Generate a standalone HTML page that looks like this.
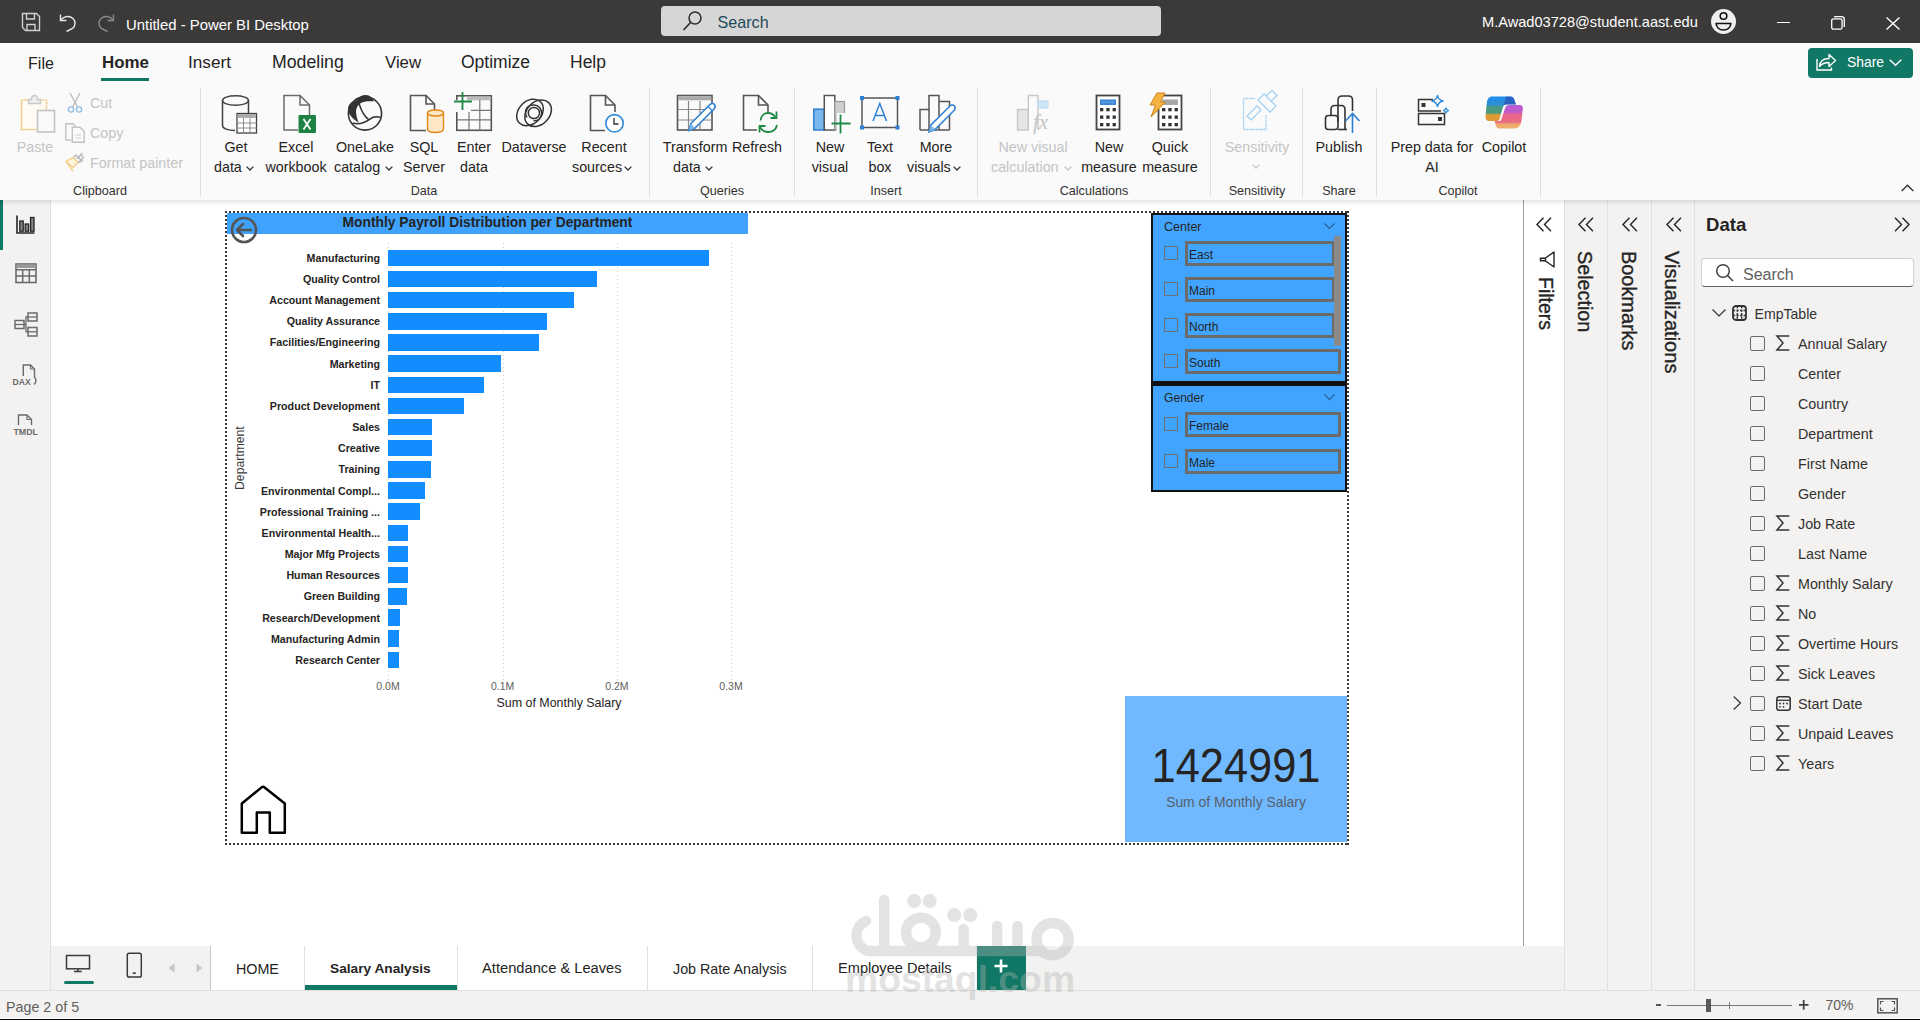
<!DOCTYPE html>
<html><head><meta charset="utf-8"><title>Power BI Desktop</title><style>
*{margin:0;padding:0;box-sizing:border-box}
html,body{width:1920px;height:1020px;overflow:hidden}
body{position:relative;font-family:"Liberation Sans",sans-serif;background:#fff}
.a{position:absolute}
.t{position:absolute;white-space:nowrap;line-height:1}
svg{overflow:visible}
</style></head><body>

<div class="a" style="left:0px;top:0px;width:1920px;height:43px;background:#3b3a39"></div>
<div class="t" style="left:126.0px;top:17.7px;font-size:14.9px;color:#ffffff;font-weight:400;">Untitled - Power BI Desktop</div>
<div class="a" style="left:661px;top:6px;width:500px;height:30px;background:#d6d6d6;border-radius:4px"></div>
<div class="t" style="left:717.6px;top:14.3px;font-size:16.1px;color:#1e4a5a;font-weight:400;">Search</div>
<svg class="a" style="left:21px;top:12px" width="20" height="20" viewBox="0 0 20 20"><path d="M1.5 1.5H15.5L18.5 4.5V18.5H4.5L1.5 15.5Z" fill="none" stroke="#d0d0d0" stroke-width="1.4"/><path d="M5.5 1.5V7H13.5V1.5M6 18.5V12.5H14V18.5" fill="none" stroke="#d0d0d0" stroke-width="1.4"/></svg>
<svg class="a" style="left:59px;top:13px" width="18" height="19" viewBox="0 0 18 19"><path d="M1.5 1.5V7.5H7.5" fill="none" stroke="#e8e8e8" stroke-width="1.4"/><path d="M1.8 7.2C5 3 10.5 2.2 14 5.5C17 8.5 16.5 13 13.5 15.5L7.5 18.5" fill="none" stroke="#e8e8e8" stroke-width="1.4"/></svg>
<svg class="a" style="left:97px;top:13px" width="18" height="19" viewBox="0 0 18 19"><path d="M16.5 1.5V7.5H10.5" fill="none" stroke="#8a8a8a" stroke-width="1.4"/><path d="M16.2 7.2C13 3 7.5 2.2 4 5.5C1 8.5 1.5 13 4.5 15.5L10.5 18.5" fill="none" stroke="#8a8a8a" stroke-width="1.4"/></svg>
<svg class="a" style="left:682px;top:11px" width="22" height="21" viewBox="0 0 22 21"><circle cx="13" cy="7" r="6" fill="none" stroke="#2b2b2b" stroke-width="1.5"/><path d="M8.8 11.2L1.5 19" stroke="#2b2b2b" stroke-width="1.6"/></svg>
<svg class="a" style="left:1711px;top:9px" width="25" height="25" viewBox="0 0 25 25"><circle cx="12.5" cy="12.5" r="12.5" fill="#f0efee"/><circle cx="12.5" cy="7" r="3.3" fill="none" stroke="#111" stroke-width="1.6"/><path d="M5.2 14.5H19.8C19.8 18.5 16.5 21 12.5 21C8.5 21 5.2 18.5 5.2 14.5Z" fill="none" stroke="#111" stroke-width="1.6"/></svg>
<div class="a" style="left:1777px;top:21.5px;width:12.5px;height:1.3px;background:#fff"></div>
<svg class="a" style="left:1831px;top:16px" width="14" height="14" viewBox="0 0 14 14"><rect x="0.7" y="2.8" width="10.4" height="10.4" rx="1.8" fill="none" stroke="#fff" stroke-width="1.3"/><path d="M3 0.7H10.5C12 0.7 13.3 2 13.3 3.5V11" fill="none" stroke="#fff" stroke-width="1.3"/></svg>
<svg class="a" style="left:1886px;top:17px" width="14" height="13" viewBox="0 0 14 13"><path d="M0.5 0.5L13.5 12.5M13.5 0.5L0.5 12.5" stroke="#fff" stroke-width="1.4"/></svg>
<div class="t" style="left:1482.0px;top:14.7px;font-size:14.6px;color:#ffffff;font-weight:400;">M.Awad03728@student.aast.edu</div>
<div class="a" style="left:0px;top:43px;width:1920px;height:157px;background:#fafafa"></div>
<div class="t" style="left:28.0px;top:55.4px;font-size:16.1px;color:#252423;font-weight:400;">File</div>
<div class="t" style="left:188.0px;top:54.4px;font-size:17.2px;color:#252423;font-weight:400;">Insert</div>
<div class="t" style="left:272.0px;top:54.0px;font-size:17.7px;color:#252423;font-weight:400;">Modeling</div>
<div class="t" style="left:385.0px;top:54.8px;font-size:16.8px;color:#252423;font-weight:400;">View</div>
<div class="t" style="left:461.0px;top:54.2px;font-size:17.5px;color:#252423;font-weight:400;">Optimize</div>
<div class="t" style="left:570.0px;top:54.2px;font-size:17.5px;color:#252423;font-weight:400;">Help</div>
<div class="t" style="left:102.0px;top:54.7px;font-size:16.9px;color:#252423;font-weight:700;">Home</div>
<div class="a" style="left:101px;top:78px;width:48px;height:3px;background:#117865"></div>
<div class="a" style="left:1808px;top:48px;width:105px;height:30px;background:#117865;border-radius:4px"></div>
<div class="t" style="left:1847.0px;top:56.2px;font-size:13.9px;color:#ffffff;font-weight:400;">Share</div>
<svg class="a" style="left:1816px;top:52px" width="21" height="19" viewBox="0 0 21 19"><path d="M1 7V18H15.5V15.5" fill="none" stroke="#fff" stroke-width="1.4"/><path d="M3.5 14.5C4 9 8 6.5 13 6.5V2.5L19.5 8.5L13 14.5V10.5C9 10.5 6 11.5 3.5 14.5Z" fill="none" stroke="#fff" stroke-width="1.4" stroke-linejoin="round"/></svg>
<svg class="a" style="left:1889px;top:59px" width="13" height="7" viewBox="0 0 13 7"><path d="M0.7 0.7L6.5 6.3L12.3 0.7" fill="none" stroke="#fff" stroke-width="1.4"/></svg>
<div class="a" style="left:200px;top:88px;width:1px;height:109px;background:#e1dfdd"></div>
<div class="a" style="left:649px;top:88px;width:1px;height:109px;background:#e1dfdd"></div>
<div class="a" style="left:794px;top:88px;width:1px;height:109px;background:#e1dfdd"></div>
<div class="a" style="left:977px;top:88px;width:1px;height:109px;background:#e1dfdd"></div>
<div class="a" style="left:1210px;top:88px;width:1px;height:109px;background:#e1dfdd"></div>
<div class="a" style="left:1302px;top:88px;width:1px;height:109px;background:#e1dfdd"></div>
<div class="a" style="left:1376px;top:88px;width:1px;height:109px;background:#e1dfdd"></div>
<div class="a" style="left:1540px;top:88px;width:1px;height:109px;background:#e1dfdd"></div>
<div class="t" style="left:-200.0px;width:600px;text-align:center;top:185.3px;font-size:12.6px;color:#323130;font-weight:400;">Clipboard</div>
<div class="t" style="left:124.0px;width:600px;text-align:center;top:185.3px;font-size:12.6px;color:#323130;font-weight:400;">Data</div>
<div class="t" style="left:422.0px;width:600px;text-align:center;top:185.3px;font-size:12.6px;color:#323130;font-weight:400;">Queries</div>
<div class="t" style="left:586.0px;width:600px;text-align:center;top:185.3px;font-size:12.6px;color:#323130;font-weight:400;">Insert</div>
<div class="t" style="left:794.0px;width:600px;text-align:center;top:185.3px;font-size:12.6px;color:#323130;font-weight:400;">Calculations</div>
<div class="t" style="left:957.0px;width:600px;text-align:center;top:185.3px;font-size:12.6px;color:#323130;font-weight:400;">Sensitivity</div>
<div class="t" style="left:1039.0px;width:600px;text-align:center;top:185.3px;font-size:12.6px;color:#323130;font-weight:400;">Share</div>
<div class="t" style="left:1158.0px;width:600px;text-align:center;top:185.3px;font-size:12.6px;color:#323130;font-weight:400;">Copilot</div>
<div class="t" style="left:-265.0px;width:600px;text-align:center;top:139.9px;font-size:14.3px;color:#c4c4c4;font-weight:400;">Paste</div>
<div class="t" style="left:90.0px;top:95.9px;font-size:14.3px;color:#c4c4c4;font-weight:400;">Cut</div>
<div class="t" style="left:90.0px;top:125.9px;font-size:14.3px;color:#c4c4c4;font-weight:400;">Copy</div>
<div class="t" style="left:90.0px;top:155.9px;font-size:14.3px;color:#c4c4c4;font-weight:400;">Format painter</div>
<div class="t" style="left:-64.0px;width:600px;text-align:center;top:139.9px;font-size:14.3px;color:#252423;font-weight:400;">Get</div>
<div class="t" style="left:214.0px;top:159.9px;font-size:14.3px;color:#252423;font-weight:400;">data</div>
<div class="t" style="left:-4.0px;width:600px;text-align:center;top:139.9px;font-size:14.3px;color:#252423;font-weight:400;">Excel</div>
<div class="t" style="left:-4.0px;width:600px;text-align:center;top:159.9px;font-size:14.3px;color:#252423;font-weight:400;">workbook</div>
<div class="t" style="left:65.0px;width:600px;text-align:center;top:139.9px;font-size:14.3px;color:#252423;font-weight:400;">OneLake</div>
<div class="t" style="left:334.0px;top:159.9px;font-size:14.3px;color:#252423;font-weight:400;">catalog</div>
<div class="t" style="left:124.0px;width:600px;text-align:center;top:139.9px;font-size:14.3px;color:#252423;font-weight:400;">SQL</div>
<div class="t" style="left:124.0px;width:600px;text-align:center;top:159.9px;font-size:14.3px;color:#252423;font-weight:400;">Server</div>
<div class="t" style="left:174.0px;width:600px;text-align:center;top:139.9px;font-size:14.3px;color:#252423;font-weight:400;">Enter</div>
<div class="t" style="left:174.0px;width:600px;text-align:center;top:159.9px;font-size:14.3px;color:#252423;font-weight:400;">data</div>
<div class="t" style="left:234.0px;width:600px;text-align:center;top:139.9px;font-size:14.3px;color:#252423;font-weight:400;">Dataverse</div>
<div class="t" style="left:304.0px;width:600px;text-align:center;top:139.9px;font-size:14.3px;color:#252423;font-weight:400;">Recent</div>
<div class="t" style="left:572.0px;top:159.9px;font-size:14.3px;color:#252423;font-weight:400;">sources</div>
<div class="t" style="left:395.0px;width:600px;text-align:center;top:139.9px;font-size:14.3px;color:#252423;font-weight:400;">Transform</div>
<div class="t" style="left:673.0px;top:159.9px;font-size:14.3px;color:#252423;font-weight:400;">data</div>
<div class="t" style="left:457.0px;width:600px;text-align:center;top:139.9px;font-size:14.3px;color:#252423;font-weight:400;">Refresh</div>
<div class="t" style="left:530.0px;width:600px;text-align:center;top:139.9px;font-size:14.3px;color:#252423;font-weight:400;">New</div>
<div class="t" style="left:530.0px;width:600px;text-align:center;top:159.9px;font-size:14.3px;color:#252423;font-weight:400;">visual</div>
<div class="t" style="left:580.0px;width:600px;text-align:center;top:139.9px;font-size:14.3px;color:#252423;font-weight:400;">Text</div>
<div class="t" style="left:580.0px;width:600px;text-align:center;top:159.9px;font-size:14.3px;color:#252423;font-weight:400;">box</div>
<div class="t" style="left:636.0px;width:600px;text-align:center;top:139.9px;font-size:14.3px;color:#252423;font-weight:400;">More</div>
<div class="t" style="left:907.0px;top:159.9px;font-size:14.3px;color:#252423;font-weight:400;">visuals</div>
<div class="t" style="left:733.0px;width:600px;text-align:center;top:139.9px;font-size:14.3px;color:#c4c4c4;font-weight:400;">New visual</div>
<div class="t" style="left:991.0px;top:159.9px;font-size:14.3px;color:#c4c4c4;font-weight:400;">calculation</div>
<div class="t" style="left:809.0px;width:600px;text-align:center;top:139.9px;font-size:14.3px;color:#252423;font-weight:400;">New</div>
<div class="t" style="left:809.0px;width:600px;text-align:center;top:159.9px;font-size:14.3px;color:#252423;font-weight:400;">measure</div>
<div class="t" style="left:870.0px;width:600px;text-align:center;top:139.9px;font-size:14.3px;color:#252423;font-weight:400;">Quick</div>
<div class="t" style="left:870.0px;width:600px;text-align:center;top:159.9px;font-size:14.3px;color:#252423;font-weight:400;">measure</div>
<div class="t" style="left:957.0px;width:600px;text-align:center;top:139.9px;font-size:14.3px;color:#c4c4c4;font-weight:400;">Sensitivity</div>
<div class="t" style="left:1039.0px;width:600px;text-align:center;top:139.9px;font-size:14.3px;color:#252423;font-weight:400;">Publish</div>
<div class="t" style="left:1132.0px;width:600px;text-align:center;top:139.9px;font-size:14.3px;color:#252423;font-weight:400;">Prep data for</div>
<div class="t" style="left:1132.0px;width:600px;text-align:center;top:159.9px;font-size:14.3px;color:#252423;font-weight:400;">AI</div>
<div class="t" style="left:1204.0px;width:600px;text-align:center;top:139.9px;font-size:14.3px;color:#252423;font-weight:400;">Copilot</div>
<svg class="a" style="left:20px;top:94px" width="36" height="40" viewBox="0 0 36 40"><path d="M1.5 6H9M18 6H26.5V16" fill="none" stroke="#f3cf8f" stroke-width="1.6" stroke-dasharray="2 0.6"/><path d="M1.5 6V35.5H16.5" fill="none" stroke="#f3cf8f" stroke-width="1.6"/><rect x="3" y="7.5" width="22" height="27" fill="#fffbf2"/><path d="M8.5 9.5V5.5H11.5C11.5 3 12.5 1.5 14.5 1.5C16.5 1.5 17.5 3 17.5 5.5H20.5V9.5Z" fill="#eee" stroke="#c8c8c8" stroke-width="1.4"/><rect x="17.5" y="16.5" width="17" height="21.5" fill="#fafafa" stroke="#c2c2c2" stroke-width="1.6"/></svg>
<svg class="a" style="left:67px;top:92px" width="16" height="22" viewBox="0 0 16 22"><path d="M3 1L10.5 15M13 1L5.5 15" stroke="#b5b5b5" stroke-width="1.2"/><circle cx="4" cy="17.5" r="2.6" fill="none" stroke="#8fbfe6" stroke-width="1.4"/><circle cx="12" cy="17.5" r="2.6" fill="none" stroke="#8fbfe6" stroke-width="1.4"/></svg>
<svg class="a" style="left:65px;top:123px" width="21" height="20" viewBox="0 0 21 20"><path d="M0.8 17.2V0.8H8L10.5 3.3" fill="none" stroke="#c2c2c2" stroke-width="1.4"/><path d="M0.8 17.2H6.5" stroke="#c2c2c2" stroke-width="1.4"/><path d="M7.3 19.2V4.3H15L19.2 8.5V19.2Z" fill="#fafafa" stroke="#c2c2c2" stroke-width="1.4"/><path d="M10.5 12H16M10.5 15H16" stroke="#d0d0d0" stroke-width="1"/></svg>
<svg class="a" style="left:65px;top:152px" width="20" height="20" viewBox="0 0 20 20"><path d="M1 9.5L8 15.5L13 10.5L8.5 5.5Z" fill="#fff6dd" stroke="#f3cf8f" stroke-width="1.4"/><path d="M1 9.5L8 19" stroke="#f3cf8f" stroke-width="1.4"/><path d="M8.5 5.5L11 3L17 9L13 10.5M12 6.5L17.5 1M16 3L18.5 5.5L14 10" fill="none" stroke="#b9b9b9" stroke-width="1.4"/></svg>
<svg class="a" style="left:221px;top:94px" width="37" height="40" viewBox="0 0 37 40"><path d="M1.5 6.5V31.5C1.5 34.5 7 36.5 14 36.5" fill="none" stroke="#424242" stroke-width="1.5"/><ellipse cx="14.5" cy="6.5" rx="13" ry="4.8" fill="none" stroke="#424242" stroke-width="1.5"/><path d="M27.5 6.5V19" fill="none" stroke="#424242" stroke-width="1.5"/><rect x="16" y="19.5" width="19.5" height="19.5" fill="#fff" stroke="#424242" stroke-width="1.3"/><rect x="16.6" y="20.1" width="18.3" height="3.8" fill="#aaa"/><path d="M22.5 24V39M29 24V39M16 29H35.5M16 34H35.5" stroke="#8a8a8a" stroke-width="1"/></svg>
<svg class="a" style="left:283px;top:94px" width="34" height="40" viewBox="0 0 34 40"><path d="M15 36H1V1.5H17L26.5 11V21" fill="none" stroke="#6b6b6b" stroke-width="1.5"/><path d="M17 1.5V11H26.5" fill="none" stroke="#6b6b6b" stroke-width="1.5"/><rect x="15.5" y="21" width="17.5" height="18" rx="1" fill="#1d8244"/><path d="M20.5 25L27.5 35.5M27.5 25L20.5 35.5" stroke="#fff" stroke-width="1.8"/></svg>
<svg class="a" style="left:340px;top:88px" width="50" height="50" viewBox="340 88 50 50"><circle cx="365" cy="113.5" r="16.6" fill="none" stroke="#333" stroke-width="1.6"/><path d="M359 122.8C352 119 347.5 113 348.1 108C348.6 104 352 101 356.2 100.5C358.5 97 362 95 366 95.1C370 95.2 372.8 98 373.8 101.5C370 101 364 101 360.6 103.2C357 105.5 355.5 110 356.2 113.5C356.5 117 357.5 120.5 359 122.8Z" fill="#333"/><path d="M359.1 103.7C361 110 364 116 368.9 119.9M352.7 123C358 124.5 364 123 368.9 119.9C372 117 375 115.5 380.7 117.4" fill="none" stroke="#333" stroke-width="1.5"/></svg>
<svg class="a" style="left:409px;top:94px" width="36" height="40" viewBox="0 0 36 40"><path d="M17 36.5H1.5V1.5H17L25.5 10V16" fill="none" stroke="#555" stroke-width="1.6"/><path d="M17 1.5V10H25.5" fill="none" stroke="#555" stroke-width="1.6"/><path d="M18.5 19V34.5C18.5 37 21.5 38.5 26.5 38.5C31.5 38.5 34.5 37 34.5 34.5V19Z" fill="#fde7c4" stroke="#e08a1e" stroke-width="1.4"/><ellipse cx="26.5" cy="19" rx="8" ry="3" fill="#fde7c4" stroke="#e08a1e" stroke-width="1.4"/></svg>
<svg class="a" style="left:453px;top:92px" width="40" height="40" viewBox="0 0 40 40"><rect x="3.8" y="3.8" width="34.5" height="34.5" fill="none" stroke="#555" stroke-width="1.6"/><rect x="14" y="4.5" width="23.5" height="3.8" fill="#bbb"/><path d="M16 18.5V38M26.8 18.5V38M4 18.3H38M4 27.8H38M26.8 8V18.5" stroke="#777" stroke-width="1.2"/><rect x="0" y="8" width="18" height="12" fill="#fafafa"/><path d="M9.5 0V18M1 9.5H19" stroke="#1e8a45" stroke-width="1.8"/></svg>
<svg class="a" style="left:510px;top:92px" width="50" height="40" viewBox="510 92 50 40"><g fill="none" stroke="#333" stroke-width="1.5"><ellipse cx="530" cy="112.45" rx="15" ry="11.3" transform="rotate(-45 530 112.45)"/><ellipse cx="538.1" cy="113.25" rx="15" ry="11.3" transform="rotate(-45 538.1 113.25)"/><path d="M527 117.5C523 110 528 104.5 534 105C540 105.5 543 111 541 116.5C539.5 120 536 121 533.5 120.5" fill="none"/><circle cx="533.9" cy="113" r="5.6"/></g></svg>
<svg class="a" style="left:589px;top:94px" width="36" height="40" viewBox="0 0 36 40"><path d="M16 36.5H1.5V1.5H16.5L26 11V18" fill="none" stroke="#555" stroke-width="1.6"/><path d="M16.5 1.5V11H26" fill="none" stroke="#555" stroke-width="1.6"/><circle cx="25.5" cy="29.3" r="8.7" fill="#fff" stroke="#2d8ad8" stroke-width="1.6"/><path d="M25 24V30H29.5" fill="none" stroke="#333" stroke-width="1.4"/></svg>
<svg class="a" style="left:676px;top:94px" width="40" height="40" viewBox="0 0 40 40"><rect x="1.5" y="1.5" width="34.5" height="34.5" fill="none" stroke="#555" stroke-width="1.6"/><rect x="2.3" y="2.3" width="33" height="4" fill="#aaa"/><path d="M12.5 7V36M24 7V36M2 15.5H36M2 26H36" stroke="#888" stroke-width="1.2"/><path d="M13 36.5L15 29.5L34 10.5C35.5 9 37.5 9 38.5 10.5C39.5 12 39.5 13.5 38 15L19 34Z" fill="#fff" stroke="#2d7fd3" stroke-width="1.5"/><path d="M13 36.5L15 29.5L19 34Z" fill="#7fb6ea"/><path d="M32 12.5L36.5 17" stroke="#2d7fd3" stroke-width="1.3"/></svg>
<svg class="a" style="left:742px;top:94px" width="37" height="40" viewBox="0 0 37 40"><path d="M15 36H1.5V1.5H16.5L26 11V19" fill="none" stroke="#555" stroke-width="1.6"/><path d="M16.5 1.5V11H26" fill="none" stroke="#555" stroke-width="1.6"/><path d="M18.5 26.5C19 21.5 22.5 19 26 19C29.5 19 32 21 33.5 23.5M35 31C34 35.5 30.5 38 26 38C22 38 19.5 36 18 33" fill="none" stroke="#1e8a45" stroke-width="1.8"/><path d="M34.5 17.5V24H28.5M17.5 38.5V32H23.5" fill="none" stroke="#1e8a45" stroke-width="1.8"/></svg>
<svg class="a" style="left:812px;top:94px" width="42" height="40" viewBox="0 0 42 40"><rect x="1.8" y="15.2" width="10.5" height="20.8" fill="#7ab7ef" stroke="#2d7fd3" stroke-width="1.5"/><rect x="12.3" y="1.5" width="10.5" height="34.5" fill="#fff" stroke="#555" stroke-width="1.5"/><rect x="22.8" y="7.5" width="9.7" height="28.5" fill="#cfcfcf" stroke="#999" stroke-width="1.2"/><rect x="25" y="19" width="16" height="21" fill="#fafafa"/><path d="M28.5 20.5V39.5M19.5 29.5H38.5" stroke="#1e8a45" stroke-width="1.8"/></svg>
<svg class="a" style="left:860px;top:96px" width="40" height="34" viewBox="0 0 40 34"><rect x="2" y="2" width="35.5" height="29.5" fill="none" stroke="#555" stroke-width="1.5"/><rect x="0" y="0" width="4" height="4" fill="#2d7fd3"/><rect x="35.5" y="0" width="4" height="4" fill="#2d7fd3"/><rect x="0" y="29.5" width="4" height="4" fill="#2d7fd3"/><rect x="35.5" y="29.5" width="4" height="4" fill="#2d7fd3"/><path d="M13 25L19.8 7.5L26.5 25M15.3 19.5H24.3" fill="none" stroke="#2d7fd3" stroke-width="1.5"/></svg>
<svg class="a" style="left:918px;top:94px" width="41" height="40" viewBox="0 0 41 40"><path d="M2 36V15.5H11M11 36V1.5H21V36M21 7.5H31.5V36M2 36H31.5" fill="none" stroke="#555" stroke-width="1.5"/><path d="M11 38L13 31L32 12C33.5 10.5 35.5 10.5 36.5 12C37.5 13.5 37.5 15 36 16.5L17 35.5Z" fill="#fff" stroke="#2d7fd3" stroke-width="1.5"/><path d="M11 38L13 31L17 35.5Z" fill="#7fb6ea"/></svg>
<svg class="a" style="left:1016px;top:94px" width="38" height="40" viewBox="0 0 38 40"><rect x="1.5" y="15.5" width="10.8" height="20.5" fill="#e6e6e6" stroke="#c8c8c8" stroke-width="1.4"/><path d="M12.3 36V1.5H22V36" fill="none" stroke="#c8c8c8" stroke-width="1.4"/><rect x="22" y="7" width="10" height="7" fill="#cfe6f7" stroke="#b8d8ef" stroke-width="1"/><text x="17" y="35" font-family="Liberation Serif" font-style="italic" font-size="21" fill="#c4c4c4">fx</text></svg>
<svg class="a" style="left:1095px;top:94px" width="27" height="38" viewBox="0 0 27 38"><rect x="1.5" y="1.5" width="23" height="34" fill="#fff" stroke="#444" stroke-width="1.8"/><rect x="5" y="5.5" width="16" height="5.5" fill="#3b86d6"/><path d="M7 8.2H19" stroke="#9cc5ef" stroke-width="1" stroke-dasharray="1.5 1"/><g fill="#333"><rect x="5" y="14" width="3.3" height="3.3"/><rect x="11.3" y="14" width="3.3" height="3.3"/><rect x="17.6" y="14" width="3.3" height="3.3"/><rect x="5" y="21.5" width="3.3" height="3.3"/><rect x="11.3" y="21.5" width="3.3" height="3.3"/><rect x="17.6" y="21.5" width="3.3" height="3.3"/><rect x="5" y="29" width="3.3" height="3.3"/><rect x="11.3" y="29" width="3.3" height="3.3"/><rect x="17.6" y="29" width="3.3" height="3.3"/></g></svg>
<svg class="a" style="left:1149px;top:92px" width="34" height="40" viewBox="0 0 34 40"><rect x="9.5" y="3.5" width="23" height="34" fill="#fff" stroke="#444" stroke-width="1.8"/><rect x="13" y="7.5" width="16" height="5.5" fill="#a8a8a8"/><g fill="#333"><rect x="13" y="16" width="3.3" height="3.3"/><rect x="19.3" y="16" width="3.3" height="3.3"/><rect x="25.6" y="16" width="3.3" height="3.3"/><rect x="13" y="23.5" width="3.3" height="3.3"/><rect x="19.3" y="23.5" width="3.3" height="3.3"/><rect x="25.6" y="23.5" width="3.3" height="3.3"/><rect x="13" y="31" width="3.3" height="3.3"/><rect x="19.3" y="31" width="3.3" height="3.3"/><rect x="25.6" y="31" width="3.3" height="3.3"/></g><path d="M8 1H16L11.5 10H16.5L2 25L6.5 13H1Z" fill="#f5b441" stroke="#d0801c" stroke-width="1"/></svg>
<svg class="a" style="left:1242px;top:92px" width="36" height="40" viewBox="0 0 36 40"><path d="M1.5 6.5H13M24 23V37.5H1.5V6.5" fill="none" stroke="#a9d3f2" stroke-width="1.4" stroke-dasharray="2 0.5"/><path d="M5 24L15 14L19 18L9 28Z" fill="none" stroke="#a9d3f2" stroke-width="1.4"/><path d="M16 8L22 2L27 7L34 14L28 20L21 13Z" fill="none" stroke="#a9d3f2" stroke-width="1.4"/><path d="M24 4L30 -1.5L35 3.5L29 9" fill="none" stroke="#a9d3f2" stroke-width="1.4"/></svg>
<svg class="a" style="left:1324px;top:94px" width="36" height="40" viewBox="0 0 36 40"><path d="M14 28V6C14 3.5 15.5 2 18 2H24.5C27 2 28.5 3.5 28.5 6V17" fill="none" stroke="#333" stroke-width="1.6"/><path d="M7 21V15.5C7 13 8.5 11.5 11 11.5H17C19.5 11.5 21 13 21 15.5V35.5" fill="none" stroke="#333" stroke-width="1.6"/><rect x="1.5" y="21.5" width="12.5" height="14" rx="3" fill="none" stroke="#333" stroke-width="1.6"/><path d="M14 35.5H23" stroke="#333" stroke-width="1.6"/><path d="M28.5 39V20M21.5 27L28.5 19.5L35.5 27" fill="none" stroke="#2d7fd3" stroke-width="1.6"/></svg>
<svg class="a" style="left:1417px;top:94px" width="34" height="32" viewBox="0 0 34 32"><path d="M16 5.5H1.5V17H24" fill="none" stroke="#333" stroke-width="1.5"/><rect x="1.5" y="19.5" width="26" height="11" fill="none" stroke="#333" stroke-width="1.5"/><rect x="4.5" y="9" width="4" height="4" fill="#333"/><rect x="21" y="23" width="4" height="4" fill="#333"/><path d="M20.5 1C21 5 22.5 6.5 26.5 7C22.5 7.5 21 9 20.5 13C20 9 18.5 7.5 14.5 7C18.5 6.5 20 5 20.5 1Z" fill="none" stroke="#2d8ad8" stroke-width="1.3"/><path d="M29 13.5C29.2 15.5 30 16.3 32 16.5C30 16.7 29.2 17.5 29 19.5C28.8 17.5 28 16.7 26 16.5C28 16.3 28.8 15.5 29 13.5Z" fill="none" stroke="#2d8ad8" stroke-width="1.2"/></svg>
<svg class="a" style="left:1480px;top:90px" width="50" height="45" viewBox="1480 90 50 45"><defs><linearGradient id="cpa" x1="0" y1="96" x2="0" y2="121" gradientUnits="userSpaceOnUse"><stop offset="0" stop-color="#1f8ef0"/><stop offset="0.35" stop-color="#2f8fd0"/><stop offset="0.45" stop-color="#4a9a80"/><stop offset="0.68" stop-color="#4a9a80"/><stop offset="0.75" stop-color="#de9a32"/><stop offset="1" stop-color="#e29a38"/></linearGradient><linearGradient id="cpb" x1="0" y1="105" x2="0" y2="128.5" gradientUnits="userSpaceOnUse"><stop offset="0" stop-color="#b85ad6"/><stop offset="0.3" stop-color="#c05ac8"/><stop offset="0.42" stop-color="#ea6688"/><stop offset="0.72" stop-color="#ea6a84"/><stop offset="0.82" stop-color="#eeaa6c"/><stop offset="1" stop-color="#f0b070"/></linearGradient></defs><path d="M1492 96.5H1510.5C1512.5 96.5 1513.5 97.5 1514.3 99.5L1516 104.5H1506C1504.5 104.5 1503.5 105.5 1503 107L1499.5 119C1499 120.5 1497.5 121 1496 121H1489C1486.5 121 1485.3 119 1485.5 116.5L1486.8 103C1487.3 99 1489 96.5 1492 96.5Z" fill="url(#cpa)"/><path d="M1506 96.5H1510.5C1512.5 96.5 1513.5 97.5 1514.3 99.5L1516 104.5H1506C1504.5 104.5 1503.5 105.5 1503 107Z" fill="#2b3fa8" opacity="0.55"/><path d="M1509.5 105H1520C1522 105 1523 106.5 1522.8 109L1521.5 120C1521 125 1518.5 128.5 1514 128.5H1499C1497.5 128.5 1496.5 127.5 1496 126L1494.5 121H1499.5C1500.5 121 1501 120.5 1501.3 119.5L1505.5 107C1506 105.8 1507.5 105 1509.5 105Z" fill="url(#cpb)"/></svg>
<svg class="a" style="left:1901px;top:184px" width="13" height="8" viewBox="0 0 13 8"><path d="M0.7 7L6.5 1.2L12.3 7" fill="none" stroke="#333" stroke-width="1.4"/></svg>
<svg class="a" style="left:246px;top:166px" width="8" height="5" viewBox="0 0 8 5"><path d="M0.6 0.6L4 4L7.4 0.6" fill="none" stroke="#333" stroke-width="1.3"/></svg>
<svg class="a" style="left:385px;top:166px" width="8" height="5" viewBox="0 0 8 5"><path d="M0.6 0.6L4 4L7.4 0.6" fill="none" stroke="#333" stroke-width="1.3"/></svg>
<svg class="a" style="left:624px;top:166px" width="8" height="5" viewBox="0 0 8 5"><path d="M0.6 0.6L4 4L7.4 0.6" fill="none" stroke="#333" stroke-width="1.3"/></svg>
<svg class="a" style="left:705px;top:166px" width="8" height="5" viewBox="0 0 8 5"><path d="M0.6 0.6L4 4L7.4 0.6" fill="none" stroke="#333" stroke-width="1.3"/></svg>
<svg class="a" style="left:953px;top:166px" width="8" height="5" viewBox="0 0 8 5"><path d="M0.6 0.6L4 4L7.4 0.6" fill="none" stroke="#333" stroke-width="1.3"/></svg>
<svg class="a" style="left:1064px;top:166px" width="8" height="5" viewBox="0 0 8 5"><path d="M0.6 0.6L4 4L7.4 0.6" fill="none" stroke="#c4c4c4" stroke-width="1.3"/></svg>
<svg class="a" style="left:1252px;top:164px" width="8" height="5" viewBox="0 0 8 5"><path d="M0.6 0.6L4 4L7.4 0.6" fill="none" stroke="#c4c4c4" stroke-width="1.3"/></svg>
<div class="a" style="left:0px;top:200px;width:51px;height:746px;background:#f3f2f1"></div>
<div class="a" style="left:0px;top:946px;width:50px;height:74px;background:#f3f2f1"></div>
<div class="a" style="left:0px;top:200px;width:3px;height:50px;background:#117865"></div>
<div class="a" style="left:1523px;top:200px;width:1px;height:746px;background:#a19f9d"></div>
<div class="a" style="left:227px;top:213px;width:521px;height:21px;background:#3fa2ff"></div>
<div class="t" style="left:187.5px;width:600px;text-align:center;top:215.8px;font-size:13.8px;color:#252423;font-weight:700;">Monthly Payroll Distribution per Department</div>
<svg class="a" style="left:230px;top:216px" width="28" height="28" viewBox="0 0 28 28"><circle cx="14" cy="14" r="12" fill="none" stroke="#555" stroke-width="2.6"/><path d="M7 14h14M7 14l6-6M7 14l6 6" fill="none" stroke="#555" stroke-width="2.6" stroke-linecap="round" stroke-linejoin="round"/></svg>
<div class="a" style="left:388.0px;top:243px;width:1px;height:437px;background:repeating-linear-gradient(180deg,#cfcfcf 0 1px,transparent 1px 4px)"></div>
<div class="a" style="left:502.6px;top:243px;width:1px;height:437px;background:repeating-linear-gradient(180deg,#cfcfcf 0 1px,transparent 1px 4px)"></div>
<div class="a" style="left:616.8px;top:243px;width:1px;height:437px;background:repeating-linear-gradient(180deg,#cfcfcf 0 1px,transparent 1px 4px)"></div>
<div class="a" style="left:731.0px;top:243px;width:1px;height:437px;background:repeating-linear-gradient(180deg,#cfcfcf 0 1px,transparent 1px 4px)"></div>
<div class="a" style="left:388px;top:249.5px;width:320.8px;height:16.5px;background:#118dff"></div>
<div class="t" style="left:-220.0px;width:600px;text-align:right;top:252.8px;font-size:10.66px;color:#252423;font-weight:700;">Manufacturing</div>
<div class="a" style="left:388px;top:270.7px;width:208.8px;height:16.5px;background:#118dff"></div>
<div class="t" style="left:-220.0px;width:600px;text-align:right;top:273.9px;font-size:10.66px;color:#252423;font-weight:700;">Quality Control</div>
<div class="a" style="left:388px;top:291.8px;width:185.8px;height:16.5px;background:#118dff"></div>
<div class="t" style="left:-220.0px;width:600px;text-align:right;top:295.1px;font-size:10.66px;color:#252423;font-weight:700;">Account Management</div>
<div class="a" style="left:388px;top:313.0px;width:159.3px;height:16.5px;background:#118dff"></div>
<div class="t" style="left:-220.0px;width:600px;text-align:right;top:316.3px;font-size:10.66px;color:#252423;font-weight:700;">Quality Assurance</div>
<div class="a" style="left:388px;top:334.1px;width:151.2px;height:16.5px;background:#118dff"></div>
<div class="t" style="left:-220.0px;width:600px;text-align:right;top:337.4px;font-size:10.66px;color:#252423;font-weight:700;">Facilities/Engineering</div>
<div class="a" style="left:388px;top:355.3px;width:112.7px;height:16.5px;background:#118dff"></div>
<div class="t" style="left:-220.0px;width:600px;text-align:right;top:358.6px;font-size:10.66px;color:#252423;font-weight:700;">Marketing</div>
<div class="a" style="left:388px;top:376.5px;width:96.3px;height:16.5px;background:#118dff"></div>
<div class="t" style="left:-220.0px;width:600px;text-align:right;top:379.7px;font-size:10.66px;color:#252423;font-weight:700;">IT</div>
<div class="a" style="left:388px;top:397.6px;width:75.8px;height:16.5px;background:#118dff"></div>
<div class="t" style="left:-220.0px;width:600px;text-align:right;top:400.9px;font-size:10.66px;color:#252423;font-weight:700;">Product Development</div>
<div class="a" style="left:388px;top:418.8px;width:44.3px;height:16.5px;background:#118dff"></div>
<div class="t" style="left:-220.0px;width:600px;text-align:right;top:422.1px;font-size:10.66px;color:#252423;font-weight:700;">Sales</div>
<div class="a" style="left:388px;top:439.9px;width:43.5px;height:16.5px;background:#118dff"></div>
<div class="t" style="left:-220.0px;width:600px;text-align:right;top:443.2px;font-size:10.66px;color:#252423;font-weight:700;">Creative</div>
<div class="a" style="left:388px;top:461.1px;width:42.9px;height:16.5px;background:#118dff"></div>
<div class="t" style="left:-220.0px;width:600px;text-align:right;top:464.4px;font-size:10.66px;color:#252423;font-weight:700;">Training</div>
<div class="a" style="left:388px;top:482.3px;width:37px;height:16.5px;background:#118dff"></div>
<div class="t" style="left:-220.0px;width:600px;text-align:right;top:485.5px;font-size:10.66px;color:#252423;font-weight:700;">Environmental Compl...</div>
<div class="a" style="left:388px;top:503.4px;width:32.2px;height:16.5px;background:#118dff"></div>
<div class="t" style="left:-220.0px;width:600px;text-align:right;top:506.7px;font-size:10.66px;color:#252423;font-weight:700;">Professional Training ...</div>
<div class="a" style="left:388px;top:524.6px;width:20.1px;height:16.5px;background:#118dff"></div>
<div class="t" style="left:-220.0px;width:600px;text-align:right;top:527.9px;font-size:10.66px;color:#252423;font-weight:700;">Environmental Health...</div>
<div class="a" style="left:388px;top:545.7px;width:20.1px;height:16.5px;background:#118dff"></div>
<div class="t" style="left:-220.0px;width:600px;text-align:right;top:549.0px;font-size:10.66px;color:#252423;font-weight:700;">Major Mfg Projects</div>
<div class="a" style="left:388px;top:566.9px;width:20.1px;height:16.5px;background:#118dff"></div>
<div class="t" style="left:-220.0px;width:600px;text-align:right;top:570.2px;font-size:10.66px;color:#252423;font-weight:700;">Human Resources</div>
<div class="a" style="left:388px;top:588.1px;width:18.7px;height:16.5px;background:#118dff"></div>
<div class="t" style="left:-220.0px;width:600px;text-align:right;top:591.3px;font-size:10.66px;color:#252423;font-weight:700;">Green Building</div>
<div class="a" style="left:388px;top:609.2px;width:11.7px;height:16.5px;background:#118dff"></div>
<div class="t" style="left:-220.0px;width:600px;text-align:right;top:612.5px;font-size:10.66px;color:#252423;font-weight:700;">Research/Development</div>
<div class="a" style="left:388px;top:630.4px;width:10.6px;height:16.5px;background:#118dff"></div>
<div class="t" style="left:-220.0px;width:600px;text-align:right;top:633.7px;font-size:10.66px;color:#252423;font-weight:700;">Manufacturing Admin</div>
<div class="a" style="left:388px;top:651.5px;width:10.6px;height:16.5px;background:#118dff"></div>
<div class="t" style="left:-220.0px;width:600px;text-align:right;top:654.8px;font-size:10.66px;color:#252423;font-weight:700;">Research Center</div>
<div class="t" style="left:88.0px;width:600px;text-align:center;top:681.4px;font-size:10.5px;color:#605e5c;font-weight:400;">0.0M</div>
<div class="t" style="left:202.6px;width:600px;text-align:center;top:681.4px;font-size:10.5px;color:#605e5c;font-weight:400;">0.1M</div>
<div class="t" style="left:316.8px;width:600px;text-align:center;top:681.4px;font-size:10.5px;color:#605e5c;font-weight:400;">0.2M</div>
<div class="t" style="left:431.0px;width:600px;text-align:center;top:681.4px;font-size:10.5px;color:#605e5c;font-weight:400;">0.3M</div>
<div class="t" style="left:259.0px;width:600px;text-align:center;top:697.2px;font-size:12.45px;color:#252423;font-weight:400;">Sum of Monthly Salary</div>
<div class="t" style="left:199.6px;top:452.4px;width:80px;text-align:center;font-size:12.2px;color:#3b3a39;transform:rotate(-90deg)">Department</div>
<svg class="a" style="left:238px;top:784px" width="50" height="52" viewBox="0 0 50 52"><path d="M3.8 48.7V19.5L23.6 3.4Q25.1 2.2 26.6 3.4L46.8 19.5V48.7H31.8V28.6H18.8V48.7Z" fill="none" stroke="#000" stroke-width="2.5" stroke-linejoin="round"/></svg>
<div class="a" style="left:1151px;top:213px;width:196px;height:170px;background:#41a5ff;border:2px solid #111"></div>
<div class="a" style="left:1151px;top:383px;width:196px;height:109px;background:#41a5ff;border:2px solid #111;border-top-width:3px"></div>
<div class="t" style="left:1164.0px;top:220.9px;font-size:12.5px;color:#252423;font-weight:400;">Center</div>
<div class="t" style="left:1164.0px;top:392.2px;font-size:12.1px;color:#252423;font-weight:400;">Gender</div>
<svg class="a" style="left:1323.5px;top:223px" width="11" height="6" viewBox="0 0 11 6"><path d="M0.5 0.5L5.5 5.5L10.5 0.5" fill="none" stroke="#2a5d8f" stroke-width="1.1"/></svg>
<svg class="a" style="left:1323.5px;top:394px" width="11" height="6" viewBox="0 0 11 6"><path d="M0.5 0.5L5.5 5.5L10.5 0.5" fill="none" stroke="#2a5d8f" stroke-width="1.1"/></svg>
<div class="a" style="left:1164px;top:246px;width:14px;height:14px;border:1px solid #6a6f78"></div>
<div class="a" style="left:1185px;top:241px;width:150px;height:25px;border:3px solid #6b6b6b"></div>
<div class="t" style="left:1189.0px;top:248.6px;font-size:12px;color:#252423;font-weight:400;">East</div>
<div class="a" style="left:1164px;top:282px;width:14px;height:14px;border:1px solid #6a6f78"></div>
<div class="a" style="left:1185px;top:277px;width:150px;height:25px;border:3px solid #6b6b6b"></div>
<div class="t" style="left:1189.0px;top:284.6px;font-size:12px;color:#252423;font-weight:400;">Main</div>
<div class="a" style="left:1164px;top:318px;width:14px;height:14px;border:1px solid #6a6f78"></div>
<div class="a" style="left:1185px;top:313px;width:150px;height:25px;border:3px solid #6b6b6b"></div>
<div class="t" style="left:1189.0px;top:320.6px;font-size:12px;color:#252423;font-weight:400;">North</div>
<div class="a" style="left:1164px;top:354px;width:14px;height:14px;border:1px solid #6a6f78"></div>
<div class="a" style="left:1185px;top:349px;width:155.5px;height:25px;border:3px solid #6b6b6b"></div>
<div class="t" style="left:1189.0px;top:356.6px;font-size:12px;color:#252423;font-weight:400;">South</div>
<div class="a" style="left:1334px;top:236px;width:7px;height:110px;background:#8a8a8a"></div>
<div class="a" style="left:1164px;top:417px;width:14px;height:14px;border:1px solid #6a6f78"></div>
<div class="a" style="left:1185px;top:412px;width:155.5px;height:25px;border:3px solid #6b6b6b"></div>
<div class="t" style="left:1189.0px;top:419.6px;font-size:12px;color:#252423;font-weight:400;">Female</div>
<div class="a" style="left:1164px;top:454px;width:14px;height:14px;border:1px solid #6a6f78"></div>
<div class="a" style="left:1185px;top:449px;width:155.5px;height:25px;border:3px solid #6b6b6b"></div>
<div class="t" style="left:1189.0px;top:456.6px;font-size:12px;color:#252423;font-weight:400;">Male</div>
<div class="a" style="left:1124.5px;top:695.5px;width:222.5px;height:146.5px;background:#71b9ff"></div>
<div class="t" style="left:936.0px;width:600px;text-align:center;top:741.4px;font-size:48.5px;color:#252423;font-weight:400;transform:scaleX(0.895)">1424991</div>
<div class="t" style="left:936.0px;width:600px;text-align:center;top:796.2px;font-size:13.9px;color:#55606a;font-weight:400;">Sum of Monthly Salary</div>
<div class="a" style="left:225px;top:211px;width:1124px;height:2px;background:repeating-linear-gradient(90deg,#3b3a39 0 2px,transparent 2px 4px)"></div>
<div class="a" style="left:225px;top:843px;width:1124px;height:2px;background:repeating-linear-gradient(90deg,#3b3a39 0 2px,transparent 2px 4px)"></div>
<div class="a" style="left:225px;top:211px;width:2px;height:634px;background:repeating-linear-gradient(180deg,#3b3a39 0 2px,transparent 2px 4px)"></div>
<div class="a" style="left:1347px;top:211px;width:2px;height:634px;background:repeating-linear-gradient(180deg,#3b3a39 0 2px,transparent 2px 4px)"></div>
<div class="a" style="left:1564px;top:200px;width:356px;height:790px;background:#f3f2f1"></div>
<div class="a" style="left:1564px;top:200px;width:1px;height:790px;background:#e1dfdd"></div>
<div class="a" style="left:1607px;top:200px;width:1px;height:790px;background:#e1dfdd"></div>
<div class="a" style="left:1651px;top:200px;width:1px;height:790px;background:#e1dfdd"></div>
<div class="a" style="left:1694px;top:200px;width:1px;height:790px;background:#e1dfdd"></div>
<div class="t" style="left:1706.0px;top:216.1px;font-size:18.6px;color:#252423;font-weight:700;">Data</div>
<div class="a" style="left:1701px;top:258px;width:213px;height:29px;background:#fff;border:1px solid #d1d1d1;border-bottom-color:#616161;border-radius:4px"></div>
<div class="t" style="left:1743.0px;top:266.5px;font-size:16px;color:#616161;font-weight:400;">Search</div>
<div class="t" style="left:1754.5px;top:307.3px;font-size:14.1px;color:#323130;font-weight:400;">EmpTable</div>
<div class="a" style="left:1750px;top:336px;width:15px;height:15px;border:1px solid #6b6b6b;border-radius:2px"></div>
<div class="t" style="left:1798.0px;top:336.9px;font-size:14.3px;color:#323130;font-weight:400;">Annual Salary</div>
<svg class="a" style="left:1776px;top:335px" width="14" height="16" viewBox="0 0 14 16"><path d="M13.3 1H1L7 8L1 15H13.3" fill="none" stroke="#333" stroke-width="1.5" stroke-linejoin="miter"/></svg>
<div class="a" style="left:1750px;top:366px;width:15px;height:15px;border:1px solid #6b6b6b;border-radius:2px"></div>
<div class="t" style="left:1798.0px;top:366.9px;font-size:14.3px;color:#323130;font-weight:400;">Center</div>
<div class="a" style="left:1750px;top:396px;width:15px;height:15px;border:1px solid #6b6b6b;border-radius:2px"></div>
<div class="t" style="left:1798.0px;top:396.9px;font-size:14.3px;color:#323130;font-weight:400;">Country</div>
<div class="a" style="left:1750px;top:426px;width:15px;height:15px;border:1px solid #6b6b6b;border-radius:2px"></div>
<div class="t" style="left:1798.0px;top:426.9px;font-size:14.3px;color:#323130;font-weight:400;">Department</div>
<div class="a" style="left:1750px;top:456px;width:15px;height:15px;border:1px solid #6b6b6b;border-radius:2px"></div>
<div class="t" style="left:1798.0px;top:456.9px;font-size:14.3px;color:#323130;font-weight:400;">First Name</div>
<div class="a" style="left:1750px;top:486px;width:15px;height:15px;border:1px solid #6b6b6b;border-radius:2px"></div>
<div class="t" style="left:1798.0px;top:486.9px;font-size:14.3px;color:#323130;font-weight:400;">Gender</div>
<div class="a" style="left:1750px;top:516px;width:15px;height:15px;border:1px solid #6b6b6b;border-radius:2px"></div>
<div class="t" style="left:1798.0px;top:516.9px;font-size:14.3px;color:#323130;font-weight:400;">Job Rate</div>
<svg class="a" style="left:1776px;top:515px" width="14" height="16" viewBox="0 0 14 16"><path d="M13.3 1H1L7 8L1 15H13.3" fill="none" stroke="#333" stroke-width="1.5" stroke-linejoin="miter"/></svg>
<div class="a" style="left:1750px;top:546px;width:15px;height:15px;border:1px solid #6b6b6b;border-radius:2px"></div>
<div class="t" style="left:1798.0px;top:546.9px;font-size:14.3px;color:#323130;font-weight:400;">Last Name</div>
<div class="a" style="left:1750px;top:576px;width:15px;height:15px;border:1px solid #6b6b6b;border-radius:2px"></div>
<div class="t" style="left:1798.0px;top:576.9px;font-size:14.3px;color:#323130;font-weight:400;">Monthly Salary</div>
<svg class="a" style="left:1776px;top:575px" width="14" height="16" viewBox="0 0 14 16"><path d="M13.3 1H1L7 8L1 15H13.3" fill="none" stroke="#333" stroke-width="1.5" stroke-linejoin="miter"/></svg>
<div class="a" style="left:1750px;top:606px;width:15px;height:15px;border:1px solid #6b6b6b;border-radius:2px"></div>
<div class="t" style="left:1798.0px;top:606.9px;font-size:14.3px;color:#323130;font-weight:400;">No</div>
<svg class="a" style="left:1776px;top:605px" width="14" height="16" viewBox="0 0 14 16"><path d="M13.3 1H1L7 8L1 15H13.3" fill="none" stroke="#333" stroke-width="1.5" stroke-linejoin="miter"/></svg>
<div class="a" style="left:1750px;top:636px;width:15px;height:15px;border:1px solid #6b6b6b;border-radius:2px"></div>
<div class="t" style="left:1798.0px;top:636.9px;font-size:14.3px;color:#323130;font-weight:400;">Overtime Hours</div>
<svg class="a" style="left:1776px;top:635px" width="14" height="16" viewBox="0 0 14 16"><path d="M13.3 1H1L7 8L1 15H13.3" fill="none" stroke="#333" stroke-width="1.5" stroke-linejoin="miter"/></svg>
<div class="a" style="left:1750px;top:666px;width:15px;height:15px;border:1px solid #6b6b6b;border-radius:2px"></div>
<div class="t" style="left:1798.0px;top:666.9px;font-size:14.3px;color:#323130;font-weight:400;">Sick Leaves</div>
<svg class="a" style="left:1776px;top:665px" width="14" height="16" viewBox="0 0 14 16"><path d="M13.3 1H1L7 8L1 15H13.3" fill="none" stroke="#333" stroke-width="1.5" stroke-linejoin="miter"/></svg>
<div class="a" style="left:1750px;top:696px;width:15px;height:15px;border:1px solid #6b6b6b;border-radius:2px"></div>
<div class="t" style="left:1798.0px;top:696.9px;font-size:14.3px;color:#323130;font-weight:400;">Start Date</div>
<svg class="a" style="left:1776px;top:695.5px" width="15" height="15" viewBox="0 0 15 15"><rect x="0.8" y="0.8" width="13.4" height="13.4" rx="2.5" fill="none" stroke="#333" stroke-width="1.5"/><path d="M1 4.3H14" stroke="#333" stroke-width="1.3"/><g fill="#333"><circle cx="4" cy="7.5" r="0.9"/><circle cx="7.5" cy="7.5" r="0.9"/><circle cx="11" cy="7.5" r="0.9"/><circle cx="4" cy="10.8" r="0.9"/><circle cx="7.5" cy="10.8" r="0.9"/></g></svg>
<svg class="a" style="left:1733px;top:696px" width="9" height="15" viewBox="0 0 9 15"><path d="M0.7 0.5L7.5 7L0.7 13.5" fill="none" stroke="#333" stroke-width="1.2"/></svg>
<div class="a" style="left:1750px;top:726px;width:15px;height:15px;border:1px solid #6b6b6b;border-radius:2px"></div>
<div class="t" style="left:1798.0px;top:726.9px;font-size:14.3px;color:#323130;font-weight:400;">Unpaid Leaves</div>
<svg class="a" style="left:1776px;top:725px" width="14" height="16" viewBox="0 0 14 16"><path d="M13.3 1H1L7 8L1 15H13.3" fill="none" stroke="#333" stroke-width="1.5" stroke-linejoin="miter"/></svg>
<div class="a" style="left:1750px;top:756px;width:15px;height:15px;border:1px solid #6b6b6b;border-radius:2px"></div>
<div class="t" style="left:1798.0px;top:756.9px;font-size:14.3px;color:#323130;font-weight:400;">Years</div>
<svg class="a" style="left:1776px;top:755px" width="14" height="16" viewBox="0 0 14 16"><path d="M13.3 1H1L7 8L1 15H13.3" fill="none" stroke="#333" stroke-width="1.5" stroke-linejoin="miter"/></svg>
<svg class="a" style="left:1711.5px;top:308.5px" width="15" height="8" viewBox="0 0 15 8"><path d="M0.5 0.5L7 7L13.5 0.5" fill="none" stroke="#333" stroke-width="1.2"/></svg>
<svg class="a" style="left:1731.5px;top:305px" width="15" height="16" viewBox="0 0 15 16"><rect x="1" y="1" width="13" height="14" rx="3" fill="none" stroke="#333" stroke-width="1.8"/><path d="M5.3 1V15M9.7 1V15M1 5.5H14M1 10.5H14" stroke="#333" stroke-width="1.5" stroke-dasharray="2.2 1.3"/></svg>
<svg class="a" style="left:1715px;top:263px" width="19" height="19" viewBox="0 0 19 19"><circle cx="8" cy="8" r="6.3" fill="none" stroke="#444" stroke-width="1.5"/><path d="M12.5 12.5L18 18" stroke="#444" stroke-width="1.6"/></svg>
<svg class="a" style="left:1894px;top:217px" width="17" height="15" viewBox="0 0 17 15"><path d="M1 0.8L7.5 7.5L1 14.2M8.5 0.8L15 7.5L8.5 14.2" fill="none" stroke="#252423" stroke-width="1.4"/></svg>
<div class="a" style="left:1524px;top:200px;width:40px;height:746px;background:#fff"></div>
<svg class="a" style="left:1536px;top:216.5px" width="16" height="16" viewBox="0 0 16 16"><path d="M7.5 0.8L1 7.5L7.5 14.2M15 0.8L8.5 7.5L15 14.2" fill="none" stroke="#252423" stroke-width="1.4"/></svg>
<svg class="a" style="left:1578px;top:216.5px" width="16" height="16" viewBox="0 0 16 16"><path d="M7.5 0.8L1 7.5L7.5 14.2M15 0.8L8.5 7.5L15 14.2" fill="none" stroke="#252423" stroke-width="1.4"/></svg>
<svg class="a" style="left:1622px;top:216.5px" width="16" height="16" viewBox="0 0 16 16"><path d="M7.5 0.8L1 7.5L7.5 14.2M15 0.8L8.5 7.5L15 14.2" fill="none" stroke="#252423" stroke-width="1.4"/></svg>
<svg class="a" style="left:1665.5px;top:216.5px" width="16" height="16" viewBox="0 0 16 16"><path d="M7.5 0.8L1 7.5L7.5 14.2M15 0.8L8.5 7.5L15 14.2" fill="none" stroke="#252423" stroke-width="1.4"/></svg>
<svg class="a" style="left:1539px;top:251px" width="16" height="17" viewBox="0 0 16 17"><path d="M15 1V16L6.5 10V7Z" fill="none" stroke="#252423" stroke-width="1.4" stroke-linejoin="round"/><path d="M6.5 7.3H1.5V9.7H6.5" fill="none" stroke="#252423" stroke-width="1.4"/></svg>
<div class="t" style="left:1554.5px;top:276.5px;font-size:19.5px;color:#252423;transform-origin:0 0;transform:rotate(90deg);-webkit-text-stroke:0.35px #252423">Filters</div>
<div class="t" style="left:1594.3px;top:250.5px;font-size:19.8px;color:#252423;transform-origin:0 0;transform:rotate(90deg);-webkit-text-stroke:0.35px #252423">Selection</div>
<div class="t" style="left:1638.3px;top:250.5px;font-size:19.9px;color:#252423;transform-origin:0 0;transform:rotate(90deg);-webkit-text-stroke:0.35px #252423">Bookmarks</div>
<div class="t" style="left:1681.8px;top:250.5px;font-size:20.1px;color:#252423;transform-origin:0 0;transform:rotate(90deg);-webkit-text-stroke:0.35px #252423">Visualizations</div>
<div class="a" style="left:50px;top:946px;width:1514px;height:44px;background:#f3f2f1"></div>
<div class="a" style="left:210px;top:946px;width:766px;height:44px;background:#fff"></div>
<div class="a" style="left:50px;top:200px;width:1px;height:790px;background:#e1dfdd"></div>
<div class="a" style="left:0px;top:990px;width:1920px;height:1px;background:#e1dfdd"></div>
<div class="a" style="left:210px;top:946px;width:1px;height:44px;background:#c8c6c4"></div>
<div class="a" style="left:304px;top:946px;width:1px;height:44px;background:#e1dfdd"></div>
<div class="a" style="left:457px;top:946px;width:1px;height:44px;background:#e1dfdd"></div>
<div class="a" style="left:647px;top:946px;width:1px;height:44px;background:#e1dfdd"></div>
<div class="a" style="left:812px;top:946px;width:1px;height:44px;background:#e1dfdd"></div>
<div class="a" style="left:305px;top:985.4px;width:152px;height:4.6px;background:#117865"></div>
<div class="a" style="left:977px;top:946px;width:49px;height:44px;background:#117865"></div>
<div class="t" style="left:236.0px;top:961.7px;font-size:14.3px;color:#252423;font-weight:400;">HOME</div>
<div class="t" style="left:330.0px;top:962.2px;font-size:13.7px;color:#252423;font-weight:700;">Salary Analysis</div>
<div class="t" style="left:482.0px;top:961.4px;font-size:14.7px;color:#252423;font-weight:400;">Attendance &amp; Leaves</div>
<div class="t" style="left:673.0px;top:961.7px;font-size:14.3px;color:#252423;font-weight:400;">Job Rate Analysis</div>
<div class="t" style="left:838.0px;top:961.4px;font-size:14.6px;color:#252423;font-weight:400;">Employee Details</div>
<div class="a" style="left:0px;top:991px;width:1920px;height:29px;background:#f3f2f1"></div>
<div class="a" style="left:0px;top:1018px;width:1920px;height:1px;background:#fff"></div>
<div class="a" style="left:0px;top:1019px;width:1920px;height:1px;background:#000"></div>
<div class="t" style="left:6.0px;top:999.9px;font-size:14.3px;color:#605e5c;font-weight:400;">Page 2 of 5</div>
<div class="t" style="left:1825.5px;top:997.9px;font-size:14px;color:#605e5c;font-weight:400;">70%</div>
<svg class="a" style="left:65px;top:954px" width="26" height="19" viewBox="0 0 26 19"><rect x="1.5" y="1.5" width="23" height="13.3" fill="none" stroke="#3b3a39" stroke-width="1.5"/><path d="M12.9 15V17.5M9 17.5H16.7" stroke="#3b3a39" stroke-width="1.5"/></svg>
<div class="a" style="left:64px;top:981px;width:30px;height:2.8px;background:#117865;border-radius:2px"></div>
<svg class="a" style="left:125.5px;top:951.5px" width="17" height="26" viewBox="0 0 17 26"><rect x="1.3" y="1.3" width="14" height="23.8" rx="1.8" fill="none" stroke="#3b3a39" stroke-width="1.5"/><path d="M6.8 21.2H9.8" stroke="#3b3a39" stroke-width="1.6"/></svg>
<svg class="a" style="left:167.5px;top:962.5px" width="7" height="10" viewBox="0 0 7 10"><path d="M6.5 0.5V9.5L0.5 5Z" fill="#c8c6c4"/></svg>
<svg class="a" style="left:196px;top:962.5px" width="7" height="10" viewBox="0 0 7 10"><path d="M0.5 0.5V9.5L6.5 5Z" fill="#c8c6c4"/></svg>
<svg class="a" style="left:994px;top:959px" width="15" height="15" viewBox="0 0 15 15"><path d="M7 0.5V13.5M0.5 7H13.5" stroke="#fff" stroke-width="2.6"/></svg>
<div class="a" style="left:1655.7px;top:1004px;width:5.4px;height:1.6px;background:#555"></div>
<div class="a" style="left:1667px;top:1004.5px;width:125px;height:1px;background:#777"></div>
<div class="a" style="left:1705.9px;top:999px;width:5.3px;height:12.9px;background:#595959"></div>
<div class="a" style="left:1729px;top:1002.4px;width:1px;height:6.3px;background:#777"></div>
<svg class="a" style="left:1799px;top:1000px" width="10" height="10" viewBox="0 0 10 10"><path d="M4.7 0V9.7M0 4.85H9.5" stroke="#444" stroke-width="1.8"/></svg>
<svg class="a" style="left:1877px;top:998px" width="21" height="16" viewBox="0 0 21 16"><rect x="0.8" y="0.8" width="19.4" height="14" fill="none" stroke="#555" stroke-width="1.5"/><path d="M3.5 6.5V3.5H6.5M14.5 3.5H17.5V6.5M17.5 9.5V12.5H14.5M6.5 12.5H3.5V9.5" fill="none" stroke="#555" stroke-width="1.2"/></svg>
<svg class="a" style="left:16px;top:215px" width="19" height="19" viewBox="0 0 19 19"><path d="M1 0.5V18H18.5" fill="none" stroke="#252423" stroke-width="1.6"/><rect x="3.8" y="6" width="3.4" height="10.2" fill="#888" stroke="#252423" stroke-width="1.3"/><rect x="9.2" y="9" width="3.4" height="7.2" fill="#888" stroke="#252423" stroke-width="1.3"/><rect x="14.6" y="2.5" width="3.4" height="13.7" fill="#888" stroke="#252423" stroke-width="1.3"/></svg>
<svg class="a" style="left:15px;top:263px" width="22" height="21" viewBox="0 0 22 21"><rect x="1" y="1" width="20" height="18.5" fill="none" stroke="#6b6b6b" stroke-width="1.6"/><path d="M1 6.8H21M1 13H21M7.7 6.8V19.5M14.3 6.8V19.5" stroke="#6b6b6b" stroke-width="1.5"/><rect x="1.5" y="1.5" width="19" height="3.5" fill="#9a9a9a"/></svg>
<svg class="a" style="left:14px;top:312px" width="24" height="25" viewBox="0 0 24 25"><rect x="1" y="8.5" width="9" height="8" fill="none" stroke="#6b6b6b" stroke-width="1.5"/><path d="M1 12.5H10" stroke="#6b6b6b" stroke-width="1.3"/><rect x="14" y="1" width="9" height="8" fill="none" stroke="#6b6b6b" stroke-width="1.5"/><path d="M14 5H23" stroke="#6b6b6b" stroke-width="1.3"/><rect x="14" y="15.5" width="9" height="8.5" fill="none" stroke="#6b6b6b" stroke-width="1.5"/><path d="M14 19.8H23" stroke="#6b6b6b" stroke-width="1.3"/><path d="M10 12.5H12V5H14M12 12.5V19.8H14" fill="none" stroke="#6b6b6b" stroke-width="1.3"/></svg>
<svg class="a" style="left:11px;top:363px" width="28" height="24" viewBox="0 0 28 24"><path d="M12.3 13V2H19.5L23.5 6V14" fill="none" stroke="#6b6b6b" stroke-width="1.4"/><path d="M19.5 2V6H23.5" fill="none" stroke="#6b6b6b" stroke-width="1.2"/><path d="M23.5 14C25.5 16 25.5 19.5 23 21.5" fill="none" stroke="#6b6b6b" stroke-width="1.4"/><text x="1.5" y="21.5" font-family="Liberation Sans" font-weight="700" font-size="8.6" fill="#6b6b6b">DAX</text></svg>
<svg class="a" style="left:13px;top:413px" width="26" height="23" viewBox="0 0 26 23"><path d="M5.5 12V2H14L18.5 6.5V12" fill="none" stroke="#6b6b6b" stroke-width="1.4"/><path d="M14 2V6.5H18.5" fill="none" stroke="#6b6b6b" stroke-width="1.2"/><text x="0.5" y="21.5" font-family="Liberation Sans" font-weight="700" font-size="8.8" fill="#6b6b6b">TMDL</text></svg>
<div class="a" style="left:0px;top:200px;width:1920px;height:6px;background:linear-gradient(rgba(0,0,0,0.09),rgba(0,0,0,0))"></div>
<svg class="a" style="left:0;top:0" width="1920" height="1020" viewBox="0 0 1920 1020"><g opacity="0.37"><g fill="none" stroke="#b4b4b4" stroke-width="10.4" stroke-linecap="round" stroke-linejoin="round"><path d="M884.2 900V950"/><path d="M866 921A16 16 0 0 0 868 951H1040"/><circle cx="920.9" cy="932.5" r="14.9"/><path d="M963.6 929V950"/><path d="M997.2 926V950"/><path d="M1017.6 926V950"/><circle cx="1052.6" cy="939.1" r="16.1"/></g><g fill="#b4b4b4"><circle cx="914.1" cy="901.1" r="7"/><circle cx="929.7" cy="901.1" r="7"/><circle cx="954.2" cy="915" r="7"/><circle cx="970.2" cy="915" r="7"/></g><text x="845" y="991.5" font-family="Liberation Sans" font-weight="700" font-size="37.3" fill="#b4b4b4">mostaql.com</text></g></svg>
</body></html>
